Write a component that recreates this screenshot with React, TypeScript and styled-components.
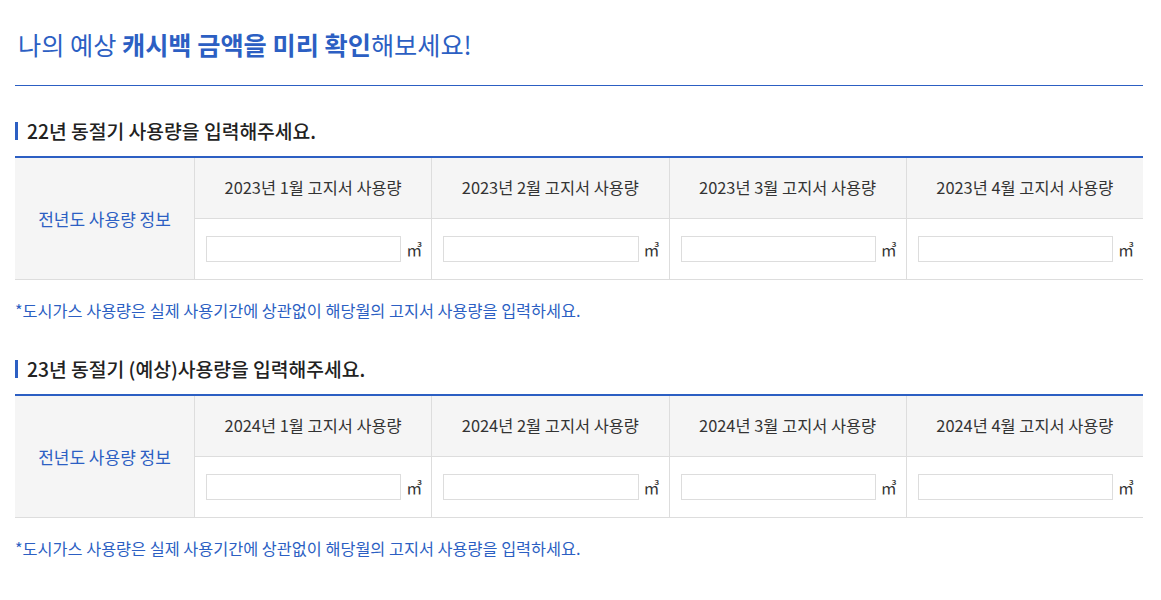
import React from "react";
import styled, { createGlobalStyle } from "styled-components";

const GlobalStyle = createGlobalStyle`
    body {
        margin: 0;
        background: #fff;
        font-family: "Noto Sans CJK KR", "Noto Sans", sans-serif;
        color: #333;
    }
`;

const months = [1, 2, 3, 4];

const UsageTable = ({ year }: { year: number }) => {
    return (
        <StyledTable>
            <div className="label">전년도 사용량 정보</div>
            {months.map((m) => (
                <div className="head" key={`h${m}`}>
                    {year}년 {m}월 고지서 사용량
                </div>
            ))}
            {months.map((m) => (
                <div className="cell" key={`c${m}`}>
                    <input type="text" className="cell__input" />
                    <span className="cell__unit">㎥</span>
                </div>
            ))}
        </StyledTable>
    );
};

const App = () => {
    return (
        <StyledPage>
            <GlobalStyle />
            <h1 className="main-title">
                나의 예상 <strong>캐시백 금액을 미리 확인</strong>해보세요!
            </h1>

            <section>
                <SectionTitle>22년 동절기 사용량을 입력해주세요.</SectionTitle>
                <UsageTable year={2023} />
                <Note>
                    *도시가스 사용량은 실제 사용기간에 상관없이 해당월의 고지서
                    사용량을 입력하세요.
                </Note>
            </section>

            <section>
                <SectionTitle>23년 동절기 (예상)사용량을 입력해주세요.</SectionTitle>
                <UsageTable year={2024} />
                <Note>
                    *도시가스 사용량은 실제 사용기간에 상관없이 해당월의 고지서
                    사용량을 입력하세요.
                </Note>
            </section>
        </StyledPage>
    );
};

const StyledPage = styled.main`
    width: 1128px;
    padding: 0 0 40px 15px;

    .main-title {
        margin: 0;
        padding: 27px 0 24px 3px;
        border-bottom: 1px solid #2c5fc3;
        font-size: 25.2px;
        line-height: 34px;
        font-weight: 400;
        color: #2c5fc3;
    }

    .main-title strong {
        font-weight: 700;
    }
`;

const SectionTitle = styled.h2`
    display: flex;
    align-items: center;
    margin: 32px 0 12px;
    font-size: 19.3px;
    line-height: 26px;
    font-weight: 500;
    color: #222;

    &::before {
        content: "";
        width: 3px;
        height: 18px;
        margin-right: 9px;
        background: #2c5fc3;
    }

    section + section & {
        margin-top: 35px;
    }
`;

const StyledTable = styled.div`
    display: grid;
    grid-template-columns: 179px repeat(4, 1fr);
    grid-template-rows: 61px 60px;
    border-top: 2px solid #2c5fc3;
    border-bottom: 1px solid #ddd;
    background: #fff;

    .label {
        grid-row: 1 / span 2;
        display: flex;
        align-items: center;
        justify-content: center;
        background: #f5f5f5;
        color: #2c5fc3;
        font-size: 17px;
    }

    .head {
        display: flex;
        align-items: center;
        justify-content: center;
        box-sizing: border-box;
        padding-bottom: 2px;
        background: #f5f5f5;
        border-left: 1px solid #ddd;
        border-bottom: 1px solid #ddd;
        font-size: 16.4px;
        color: #333;
    }

    .cell {
        display: flex;
        align-items: center;
        gap: 5px;
        padding: 0 10px 0 11px;
        border-left: 1px solid #ddd;
    }

    .cell__input {
        flex: 1;
        min-width: 0;
        height: 26px;
        box-sizing: border-box;
        border: 1px solid #ddd;
        padding: 0 6px;
        font-family: inherit;
        outline: none;
    }

    .cell__unit {
        width: 15px;
        font-size: 16px;
        color: #333;
        line-height: 1;
    }
`;

const Note = styled.p`
    margin: 19px 0 0;
    font-size: 16.3px;
    line-height: 22px;
    color: #2c5fc3;
`;

export default App;
